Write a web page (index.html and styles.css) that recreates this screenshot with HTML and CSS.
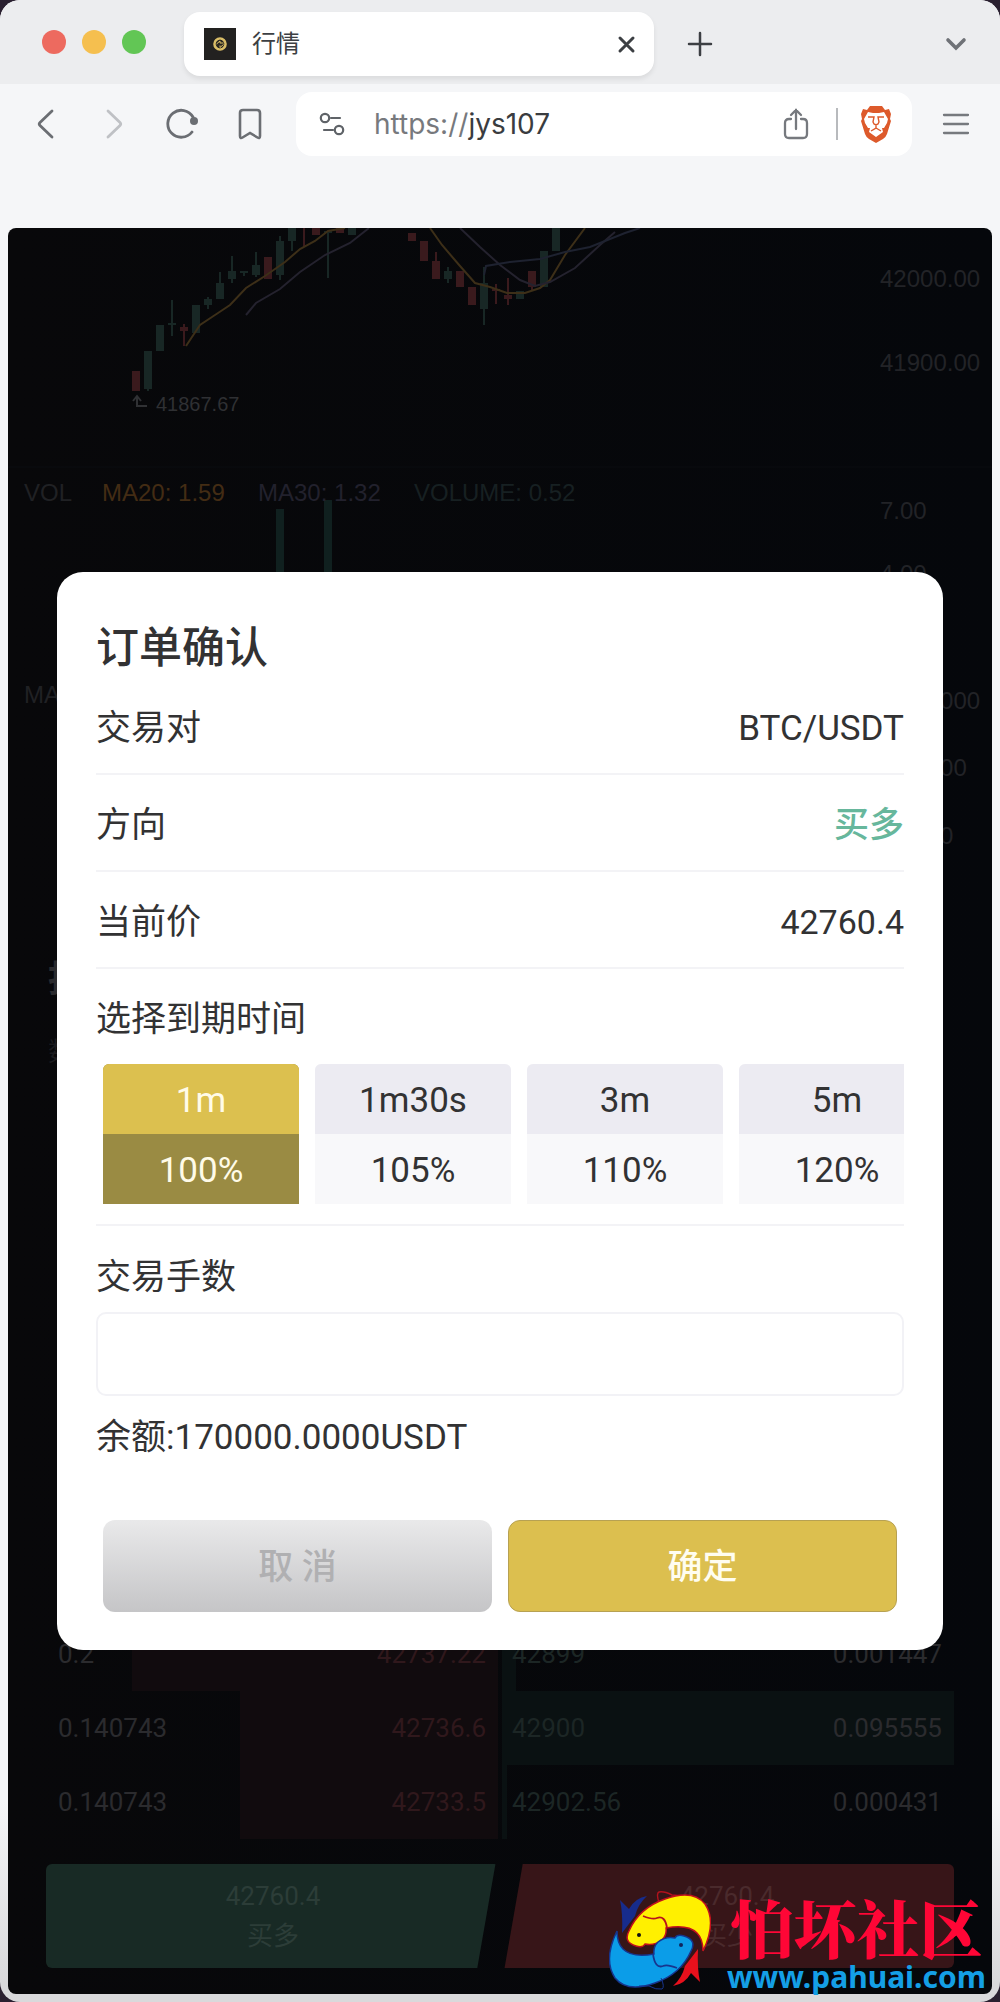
FILE: index.html
```html
<!DOCTYPE html>
<html lang="zh-CN">
<head>
<meta charset="utf-8">
<meta name="viewport" content="width=device-width, initial-scale=1">
<title>行情</title>
<link rel="stylesheet" href="styles.css">
</head>
<body>
<div class="window">
  <header class="tabbar">
    <div class="lights"><span class="light red"></span><span class="light amber"></span><span class="light green"></span></div>
    <div class="tab">
      <svg class="favicon" viewBox="0 0 32 32" aria-hidden="true"><rect width="32" height="32" fill="#222120"/><circle cx="16" cy="16" r="5.500" fill="none" stroke="#d9bd67" stroke-width="2.600"/><path d="M16 11.500l4.500 4.500-4.500 4.500-4.500-4.500z" fill="#2b2820"/><path d="M12.500 16l3.500-3v2h3.500M19.500 16.500l-3.500 3v-2" fill="none" stroke="#d9bd67" stroke-width="1"/></svg>
      <span class="tab-title">行情</span>
      <button class="icon-btn" aria-label="关闭标签页"><svg width="20" height="20" viewBox="0 0 20 20"><path d="M4 4l13 13M17 4L4 17" fill="none" stroke="#3c3f43" stroke-width="3" stroke-linecap="round"/></svg></button>
    </div>
    <button class="icon-btn new-tab" aria-label="新标签页"><svg width="26" height="26" viewBox="0 0 26 26"><path d="M13 2v22M2 13h22" fill="none" stroke="#3c3f43" stroke-width="2.500" stroke-linecap="round"/></svg></button>
    <button class="icon-btn tab-list" aria-label="标签页列表"><svg width="24" height="24" viewBox="0 0 24 24"><path d="M4 8l8 8 8-8" fill="none" stroke="#6f7277" stroke-width="3.600" stroke-linecap="round"/></svg></button>
  </header>
  <nav class="toolbar">
    <div class="nav-buttons">
      <button class="icon-btn" aria-label="后退"><svg width="32" height="32" viewBox="0 0 32 32"><path d="M22 3L10 14.500q-1.500 1.500 0 3L22 29" fill="none" stroke="#6b6e73" stroke-width="2.800" stroke-linecap="round"/></svg></button>
      <button class="icon-btn" aria-label="前进"><svg width="32" height="32" viewBox="0 0 32 32"><path d="M10 3l12 11.500q1.500 1.500 0 3L10 29" fill="none" stroke="#bfc1c5" stroke-width="2.800" stroke-linecap="round"/></svg></button>
      <button class="icon-btn" aria-label="刷新"><svg width="32" height="32" viewBox="0 0 32 32"><path d="M27 9A13.500 13.500 0 1 0 26 24" fill="none" stroke="#6b6e73" stroke-width="2.800" stroke-linecap="round"/><circle cx="28" cy="13" r="4" fill="#6b6e73"/></svg></button>
      <button class="icon-btn" aria-label="书签"><svg width="32" height="32" viewBox="0 0 32 32"><path d="M9 2h14q3 0 3 3v23q0 3-2.500 1.500L16 25l-7.500 4.500Q6 31 6 28V5q0-3 3-3z" fill="none" stroke="#6b6e73" stroke-width="2.600"/></svg></button>
    </div>
    <div class="address">
      <svg width="26" height="26" viewBox="0 0 26 26" aria-hidden="true"><g fill="none" stroke="#5f6368" stroke-width="2.200" stroke-linecap="round"><circle cx="6" cy="7" r="4.200"/><path d="M12 7h9M5 19h9"/><circle cx="20" cy="19" r="4.200"/></g></svg>
      <a class="url" href="#">https://<span class="host">jys107</span></a>
      <button class="icon-btn" aria-label="分享"><svg width="28" height="34" viewBox="0 0 28 34"><path d="M9 12H7q-4 0-4 4v11q0 4 4 4h14q4 0 4-4V16q0-4-4-4h-2M14 22V3M9 8l5-5 5 5" fill="none" stroke="#76797e" stroke-width="2.300" stroke-linecap="round"/></svg></button>
      <span class="divider"></span>
      <button class="icon-btn" aria-label="Brave Shields"><svg width="32" height="38" viewBox="0 0 32 38"><path d="M10 1h12l3 4 4-1 2 5-1 5 1 2-4 13q-1 3-4 5l-7 4-7-4q-3-2-4-5L1 16l1-2-1-5 2-5 4 1z" fill="#dd5a2b"/><path d="M8 7l5 1h6l5-1 4 7-1 4-3 5-2 0 1 4-7 5-7-5 1-4-2 0-3-5-1-4z" fill="#fff"/><path d="M8 12l6 0-1 5 1 2 2 1 2-1 1-2-1-5 6 0M16 20v3l-5 3M16 23l5 3" fill="none" stroke="#dd5a2b" stroke-width="1.400"/></svg></button>
    </div>
    <button class="icon-btn" aria-label="菜单"><svg width="28" height="24" viewBox="0 0 28 24"><path d="M2 3h24M2 12h24M2 21h24" fill="none" stroke="#76797e" stroke-width="2.300" stroke-linecap="round"/></svg></button>
  </nav>

  <div class="page">
    <main class="market">
      <svg class="chart" viewBox="8 228 984 640" role="img" aria-label="K线图">
        <path d="M8 467h984" stroke="#0b0c10"/>
        <g class="up">
          <path d="M144 351h8v38h-8zM156 325h8v26h-8zM168 323h8v2h-8zM192 305h8v28h-8zM204 299h8v6h-8zM216 283h8v16h-8zM228 271h8v8h-8zM240 271h8v2h-8zM252 265h8v10h-8zM276 241h8v34h-8zM288 228h8v13h-8zM324 231h8v2h-8zM348 228h8v7h-8zM444 271h8v8h-8zM480 283h8v26h-8zM516 291h8v8h-8zM540 251h8v36h-8zM552 228h8v23h-8z"/>
          <path d="M147 388h2v3h-2zM171 300h2v36h-2zM207 297h2v12h-2zM219 272h2v12h-2zM231 256h2v27h-2zM243 272h2v4h-2zM255 252h2v25h-2zM279 236h2v44h-2zM291 240h2v11h-2zM327 232h2v46h-2zM447 267h2v16h-2zM483 267h2v58h-2z"/>
        </g>
        <g class="down">
          <path d="M132 371h8v20h-8zM180 327h8v4h-8zM264 257h8v22h-8zM312 228h8v7h-8zM336 228h8v5h-8zM408 233h8v8h-8zM420 241h8v20h-8zM432 261h8v18h-8zM456 271h8v16h-8zM468 287h8v18h-8zM492 289h8v2h-8zM504 295h8v4h-8zM528 271h8v16h-8z"/>
          <path d="M183 324h2v22h-2zM303 228h2v19h-2zM435 252h2v10h-2zM495 284h2v20h-2zM507 278h2v27h-2zM531 286h2v5h-2z"/>
        </g>
        <path class="bars" d="M276 509h8v90h-8zM324 500h8v99h-8z"/>
        <path class="ma20" d="M186 346l14-21 15-10 15-10 16-17 19-12 20-14 15-13 15-8 13-10 17-3M430 228l12 17 18 21 15 17 15 4 17 6h18l15-5 10-8 15-25 20-27"/>
        <path class="ma30" d="M246 315l10-12 24-14 20-17 25-17 25-12 19-15M460 228l20 19 20 18 20 15 15 6 15-4 25-14 25-23 15-13"/>
        <path class="ma60" d="M484 275l2-9 24-4 30-3 25-7 25-5 15-6 20-8 15-5"/>
        <path d="M147 406h-10v-9m-4 4l4-5 4 5" fill="none" stroke="#303134" stroke-width="2"/>
        <text class="low" x="156" y="411">41867.67</text>
        <text class="dim" x="24" y="501">VOL</text>
        <text class="t20" x="102" y="501">MA20: 1.59</text>
        <text class="t30" x="258" y="501">MA30: 1.32</text>
        <text class="tvol" x="414" y="501">VOLUME: 0.52</text>
        <text class="axis" x="880" y="287">42000.00</text>
        <text class="axis" x="880" y="371">41900.00</text>
        <text class="axis" x="880" y="519">7.00</text>
        <text class="axis" x="880" y="582">4.00</text>
        <text class="dim" x="24" y="703">MACD</text>
        <text class="axis" x="880" y="709">100.0000</text>
        <text class="axis" x="880" y="776">50.0000</text>
        <text class="axis" x="880" y="844">0.0000</text>
      </svg>
      <div class="book-head"><b>指</b><span>数</span></div>
      <div class="book">
        <div class="side bids">
          <div class="level"><i class="depth" style="width:81%"></i><span class="qty">0.2</span><span class="price">42737.22</span></div>
          <div class="level"><i class="depth" style="width:57%"></i><span class="qty">0.140743</span><span class="price">42736.6</span></div>
          <div class="level"><i class="depth" style="width:57%"></i><span class="qty">0.140743</span><span class="price">42733.5</span></div>
        </div>
        <div class="side asks">
          <div class="level"><i class="depth" style="width:3%"></i><span class="price">42899</span><span class="qty">0.001447</span></div>
          <div class="level"><i class="depth" style="width:100%"></i><span class="price">42900</span><span class="qty">0.095555</span></div>
          <div class="level"><i class="depth" style="width:1%"></i><span class="price">42902.56</span><span class="qty">0.000431</span></div>
        </div>
      </div>
      <div class="trade">
        <button class="trade-btn buy"><span>42760.4</span><span>买多</span></button>
        <button class="trade-btn sell"><span>42760.4</span><span>买少</span></button>
      </div>
    </main>

    <form class="dialog" role="dialog" aria-labelledby="dialog-title">
      <h1 id="dialog-title">订单确认</h1>
      <div class="row"><span>交易对</span><span>BTC/USDT</span></div>
      <div class="row"><span>方向</span><span class="long">买多</span></div>
      <div class="row"><span>当前价</span><span class="quote">42760.4</span></div>
      <div class="expiry">
        <p class="label">选择到期时间</p>
        <div class="options">
          <button type="button" class="option active"><span>1m</span><span>100%</span></button>
          <button type="button" class="option"><span>1m30s</span><span>105%</span></button>
          <button type="button" class="option"><span>3m</span><span>110%</span></button>
          <button type="button" class="option"><span>5m</span><span>120%</span></button>
        </div>
      </div>
      <label class="label" for="lots">交易手数</label>
      <input id="lots" class="lots" type="text">
      <p class="balance">余额:170000.0000USDT</p>
      <div class="actions">
        <button type="button" class="cancel">取 消</button>
        <button type="submit" class="ok">确定</button>
      </div>
    </form>
  </div>

  <a class="watermark" href="#">
    <svg class="fish" viewBox="0 0 102 102" aria-hidden="true">
      <path d="M50 13Q47 3 50 2q5-1 13 3l11 1" fill="none" stroke="#b3121c" stroke-width="1.500"/>
      <path d="M11 10l9 9Q26 8 38 6q-9 8-12 20L13 43Q14 24 11 10z" fill="#172c8c"/>
      <path d="M91 92l-9-9Q76 94 64 96q9-8 12-20l13-17q-1 19 2 33z" fill="#e8101c"/>
      <path id="fish-body" d="M27 56Q14 52 20 41 30 18 56 9 84-1 96 14q12 18-2 47 0-12-6-18-9-9-31-5 1 7-4 12-8 6-17 4-2 4-9 2z" fill="#fff000" stroke="#c3111c" stroke-width="1.500"/>
      <path d="M34 26q10 4 14 2 8-3 10 10" fill="none" stroke="#b8121c" stroke-width="1.800"/>
      <g transform="rotate(180 51 51)">
        <path d="M27 56Q14 52 20 41 30 18 56 9 84-1 96 14q12 18-2 47 0-12-6-18-9-9-31-5 1 7-4 12-8 6-17 4-2 4-9 2z" fill="#0b9de8" stroke="#17358e" stroke-width="1.500"/>
        <path d="M34 24q10 4 14 2 8-3 10 12" fill="none" stroke="#17358e" stroke-width="1.800"/>
      </g>
      <path d="M52 88q4 9 1 11-6 1-13-3H30" fill="none" stroke="#17358e"/>
      <circle cx="30" cy="45" r="2" fill="#111"/><circle cx="72" cy="55" r="2" fill="#10255e"/>
    </svg>
    <span class="brand"><span class="brand-name">怕坏社区</span><span class="brand-url">www.pahuai.com</span></span>
  </a>
</div>
</body>
</html>
```
FILE: styles.css
```css
* { box-sizing: border-box; }
body {
  margin: 0;
  background: #2a2030;
  color: #323233;
  font-family: Roboto, "Noto Sans CJK SC", sans-serif;
}
button { font: inherit; border: 0; padding: 0; background: none; color: inherit; cursor: pointer; }
a { color: inherit; text-decoration: none; }
p, h1 { margin: 0; }
.window {
  position: relative;
  display: flex;
  flex-direction: column;
  min-height: 100vh;
  padding-bottom: 8px;
  border-radius: 20px;
  overflow: hidden;
  background: linear-gradient(#f5f6f8 90%, #d9d9db 99%);
}

/* browser chrome */
.icon-btn { display: flex; flex: none; }
.tabbar { display: flex; align-items: center; height: 84px; padding: 0 32px 0 42px; background: #ecedef; }
.lights { display: flex; gap: 16px; margin-right: 38px; }
.light { width: 24px; height: 24px; border-radius: 50%; }
.red { background: #ed6a5f; }
.amber { background: #f5bf4f; }
.green { background: #62c655; }
.tab {
  display: flex;
  align-items: center;
  flex: 0 1 470px;
  height: 64px;
  margin-top: 4px;
  padding: 0 18px 0 20px;
  border-radius: 16px;
  background: #fff;
  box-shadow: 0 3px 5px rgba(0, 0, 0, .08);
}
.favicon { width: 32px; height: 32px; }
.tab-title { flex: 1; margin-left: 16px; font-size: 24px; line-height: 32px; color: #3c3f43; }
.new-tab { margin: 4px 0 0 33px; }
.tab-list { margin: 4px 0 0 auto; }
.toolbar { display: flex; align-items: center; gap: 30px; height: 144px; padding: 8px 30px 72px; background: #f5f6f8; }
.nav-buttons { display: flex; gap: 36px; }
.address { display: flex; align-items: center; flex: 1; height: 64px; padding: 0 20px 0 23px; border-radius: 16px; background: #fff; }
.url { flex: 1; margin-left: 29px; font: 28px/36px Inter, sans-serif; color: #77797d; }
.host { color: #3a3c40; }
.divider { width: 2px; height: 32px; margin: 0 22px 0 26px; background: #b8babd; }

/* trading page, dimmed behind the dialog */
.page {
  position: relative;
  flex: 1;
  margin: 0 8px;
  border-radius: 8px;
  overflow: hidden;
  background: linear-gradient(90deg, #08080a, #05070b);
}
.market { display: flex; flex-direction: column; color: #2b2b2e; }
.chart { display: block; width: 100%; font: 24px "Liberation Sans", sans-serif; }
.up { fill: #182725; }
.down { fill: #3a1a1d; }
.bars { fill: #10201f; }
.ma20, .ma30, .ma60 { fill: none; stroke-width: 2; }
.ma20 { stroke: #3d2f18; }
.ma30 { stroke: #24222e; }
.ma60 { stroke: #1e2230; }
.low { font-size: 20px; fill: #2f3033; }
.dim { fill: #202124; }
.t20 { fill: #432c14; }
.t30 { fill: #22212d; }
.tvol { fill: #172022; }
.axis { fill: #222327; }
.book-head { display: flex; flex-direction: column; gap: 24px; height: 749px; padding: 88px 40px; font-size: 26px; line-height: 48px; }
.book-head b { font-size: 36px; }
.book-head span { color: #1b1b1e; }
.book { display: grid; grid-template-columns: 1fr 1fr; gap: 4px; padding: 0 38px; font-size: 26px; }
.level { position: relative; display: flex; align-items: center; justify-content: space-between; height: 74px; padding: 0 12px; }
.asks .level { padding-left: 10px; }
.level span { position: relative; }
.depth { position: absolute; top: 0; bottom: 0; }
.bids .depth { right: 0; background: #110b0e; }
.asks .depth { left: 0; background: #0a1112; }
.bids .price { color: #30181c; }
.asks .price { color: #1c2625; }
.trade { display: grid; grid-template-columns: 1fr 1fr; padding: 25px 38px 26px; }
.trade-btn {
  display: flex;
  flex-direction: column;
  align-items: center;
  justify-content: center;
  height: 104px;
  border-radius: 6px;
  font-size: 26px;
  line-height: 40px;
}
.buy { background: #182a25; color: #2c3d38; clip-path: polygon(0 0, 99% 0, 95% 100%, 0 100%); }
.sell { background: #371518; color: #4a2a2c; clip-path: polygon(5% 0, 100% 0, 100% 100%, 1% 100%); }

/* order confirmation */
.dialog {
  position: absolute;
  top: 344px;
  left: 49px;
  right: 49px;
  padding: 50px 39px 38px;
  border-radius: 26px;
  background: #fff;
  font-size: 35px;
  line-height: 48px;
}
.dialog h1 { font-size: 43px; line-height: 52px; font-weight: 500; }
.row { display: flex; justify-content: space-between; padding: 26px 0 20px; border-bottom: 2px solid #f3f3f6; line-height: 49px; }
h1 + .row { padding-top: 30px; }
.quote { font-size: 34px; }
.long { color: #67b79c; font-weight: 500; }
.expiry { padding: 27px 0 20px; border-bottom: 2px solid #f3f3f6; }
.label { display: block; }
.options { display: flex; gap: 16px; margin-top: 20px; padding-left: 7px; overflow: hidden; }
.option { flex: none; width: 196px; border-radius: 6px 6px 0 0; overflow: hidden; background: #f8f8fa; font-size: 35px; }
.option span { display: block; padding-top: 4px; line-height: 66px; }
.option span:first-child { background: #ecebf2; }
.option.active { background: #9a8b43; color: #fffbe8; }
.option.active span:first-child { background: #dcc04f; }
.expiry + .label { margin-top: 28px; }
.lots {
  display: block;
  width: 100%;
  height: 84px;
  margin-top: 10px;
  padding: 0 20px;
  border: 2px solid #f2f2f6;
  border-radius: 10px;
  font: inherit;
  color: inherit;
}
.balance { margin-top: 18px; }
.actions { display: grid; grid-template-columns: 1fr 1fr; gap: 16px; margin: 58px 7px 0; }
.actions button { height: 92px; padding-top: 4px; border-radius: 12px; font-weight: 500; }
.cancel { background: linear-gradient(#e9e9ea, #c5c5c7); color: #b0b0b2; }
.actions .ok { background: #dcbf4f; border: 1px solid #b7a152; color: #fffdf0; }

/* site mark over the lower corner */
.watermark { position: absolute; right: 14px; bottom: 8px; display: flex; align-items: flex-end; gap: 16px; }
.fish { width: 102px; height: 102px; margin-bottom: 2px; }
.brand { display: flex; flex-direction: column; align-items: center; }
.brand-name { font: 900 63px/68px "Noto Serif CJK SC", "Noto Sans CJK SC", serif; color: #ff0636; }
.brand-url { font: 700 30px/34px "Noto Sans", sans-serif; color: #149fe6; }
```
